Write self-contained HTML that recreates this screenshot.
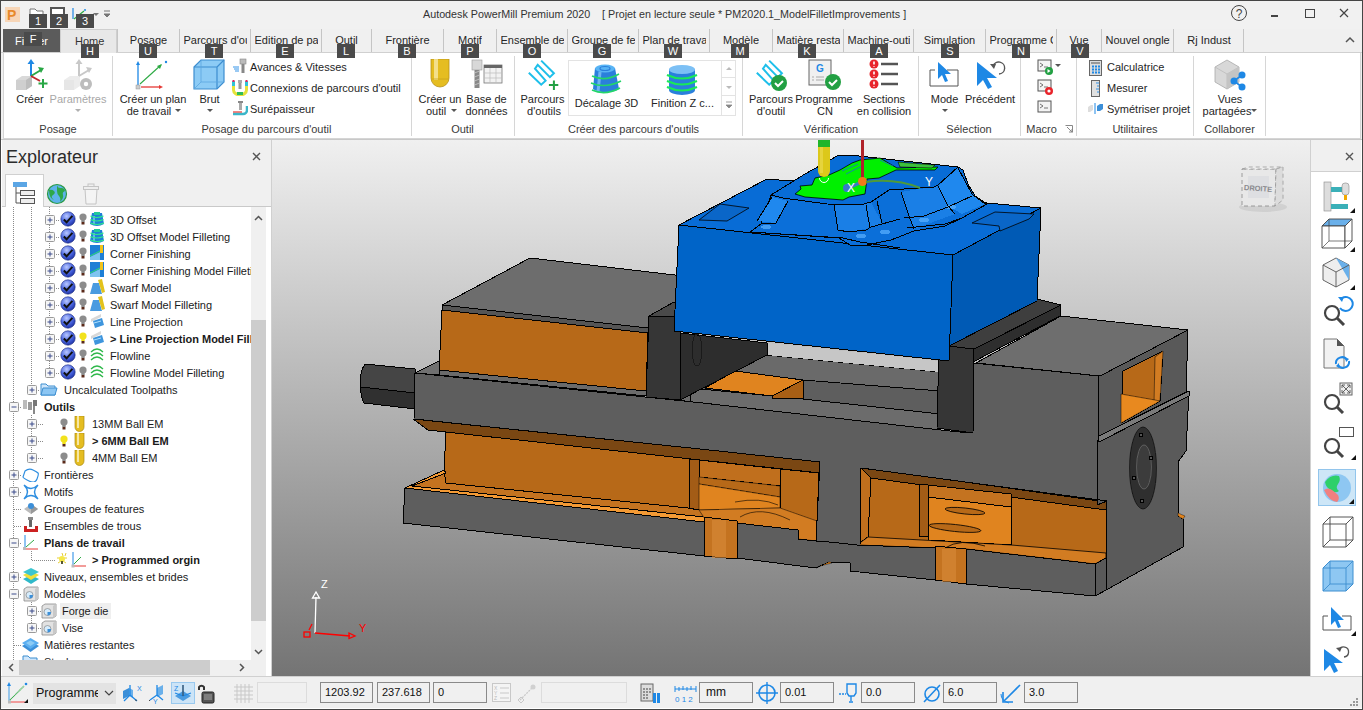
<!DOCTYPE html><html><head><meta charset="utf-8"><style>
*{box-sizing:border-box}
html,body{margin:0;padding:0}
body{width:1363px;height:710px;overflow:hidden;position:relative;background:#f0f0f0;font-family:"Liberation Sans",sans-serif;font-size:11px;color:#1e1e1e}
.ab{position:absolute}
.t{position:absolute;white-space:nowrap;line-height:12px}
.kt{position:absolute;width:18px;height:14px;background:#4a4a4a;color:#fff;font-size:11px;line-height:14px;text-align:center}
.tab{position:absolute;top:29px;height:23px;border-left:1px solid #c5c5c5;text-align:center;line-height:23px;color:#262626;white-space:nowrap;overflow:hidden}
.sep{position:absolute;top:56px;width:1px;height:80px;background:#d6d6d6}
.gl{position:absolute;top:123px;height:12px;line-height:12px;text-align:center;color:#333;white-space:nowrap}
.row{position:absolute;height:17px;line-height:17px;white-space:nowrap}
.box{position:absolute;height:21px;border:1px solid #8a8a8a;background:#f0f0f0;line-height:19px;padding-left:4px;color:#111}
</style></head><body>
<div class="ab" style="left:0;top:0;width:1363px;height:1px;background:#454545"></div>
<div class="ab" style="left:1px;top:1px;width:1361px;height:28px;background:#f1f1f1"></div>
<div class="ab" style="left:5px;top:7px;width:15px;height:15px;background:#f7d6b8"></div>
<div class="t" style="left:7px;top:8px;font-size:14px;font-weight:bold;color:#e8892a;line-height:14px">P</div>
<svg class="ab" style="left:28px;top:6px" width="90" height="20" viewBox="0 0 90 20"><path d="M2 3h5l2 2h6v6H2z" fill="#fff" stroke="#777"/><rect x="23" y="2" width="13" height="12" fill="#fff" stroke="#555" stroke-width="2"/><line x1="45" y1="2" x2="45" y2="13" stroke="#1e88e5" stroke-width="1.2"/><line x1="46" y1="13" x2="56" y2="5" stroke="#2eaa44" stroke-width="1.2"/><circle cx="57" cy="4" r="1" fill="#1e88e5"/><path d="M65 7h6l-3 3z" fill="#777"/><path d="M76 5h6M76 8h6l-3 3z" fill="#777" stroke="#777" stroke-width="1"/></svg>
<div class="t" style="left:423px;top:8px;font-size:10.75px;color:#333;line-height:13px">Autodesk PowerMill Premium 2020</div>
<div class="t" style="left:602px;top:8px;font-size:10.75px;color:#333;line-height:13px">[ Projet en lecture seule * PM2020.1_ModelFilletImprovements ]</div>
<svg class="ab" style="left:1225px;top:3px" width="135" height="22" viewBox="0 0 135 22"><circle cx="14" cy="10" r="7.5" fill="none" stroke="#444" stroke-width="1"/><text x="14" y="14.5" font-family="Liberation Sans" font-size="12" text-anchor="middle" fill="#444">?</text><rect x="46" y="12" width="7" height="2" fill="#444"/><rect x="80.5" y="6.5" width="9" height="8" fill="none" stroke="#444" stroke-width="1"/><path d="M115 6l8 8M123 6l-8 8" stroke="#444" stroke-width="1.2"/></svg>
<div class="ab" style="left:1px;top:52px;width:1361px;height:1px;background:#d0d0d0"></div>
<div class="ab" style="left:3px;top:29px;width:57px;height:23px;background:#5b5b5b"></div>
<div class="t" style="left:15px;top:35px;color:#fff">Fichier</div>
<div class="ab" style="left:60px;top:29px;width:57px;height:24px;background:#e8e8e8;border:1px solid #cfcfcf;border-bottom:none"></div>
<div class="t" style="left:75px;top:35px;color:#333">Home</div>
<div class="tab" style="left:117px;width:62px"><span style="display:inline-block;max-width:54px;overflow:hidden;vertical-align:top">Posage</span></div>
<div class="tab" style="left:179px;width:71px"><span style="display:inline-block;max-width:63px;overflow:hidden;vertical-align:top">Parcours d'outil</span></div>
<div class="tab" style="left:250px;width:71px"><span style="display:inline-block;max-width:63px;overflow:hidden;vertical-align:top">Edition de parcours</span></div>
<div class="tab" style="left:321px;width:50px"><span style="display:inline-block;max-width:42px;overflow:hidden;vertical-align:top">Outil</span></div>
<div class="tab" style="left:371px;width:72px"><span style="display:inline-block;max-width:64px;overflow:hidden;vertical-align:top">Frontière</span></div>
<div class="tab" style="left:443px;width:53px"><span style="display:inline-block;max-width:45px;overflow:hidden;vertical-align:top">Motif</span></div>
<div class="tab" style="left:496px;width:71px"><span style="display:inline-block;max-width:63px;overflow:hidden;vertical-align:top">Ensemble de trous</span></div>
<div class="tab" style="left:567px;width:71px"><span style="display:inline-block;max-width:63px;overflow:hidden;vertical-align:top">Groupe de features</span></div>
<div class="tab" style="left:638px;width:71px"><span style="display:inline-block;max-width:63px;overflow:hidden;vertical-align:top">Plan de travail</span></div>
<div class="tab" style="left:709px;width:63px"><span style="display:inline-block;max-width:55px;overflow:hidden;vertical-align:top">Modèle</span></div>
<div class="tab" style="left:772px;width:71px"><span style="display:inline-block;max-width:63px;overflow:hidden;vertical-align:top">Matière restante</span></div>
<div class="tab" style="left:843px;width:70px"><span style="display:inline-block;max-width:62px;overflow:hidden;vertical-align:top">Machine-outil</span></div>
<div class="tab" style="left:913px;width:72px"><span style="display:inline-block;max-width:64px;overflow:hidden;vertical-align:top">Simulation</span></div>
<div class="tab" style="left:985px;width:71px"><span style="display:inline-block;max-width:63px;overflow:hidden;vertical-align:top">Programme CN</span></div>
<div class="tab" style="left:1056px;width:45px"><span style="display:inline-block;max-width:37px;overflow:hidden;vertical-align:top">Vue</span></div>
<div class="tab" style="left:1101px;width:72px"><span style="display:inline-block;max-width:64px;overflow:hidden;vertical-align:top">Nouvel onglet</span></div>
<div class="tab" style="left:1173px;width:71px"><span style="display:inline-block;max-width:63px;overflow:hidden;vertical-align:top">Rj Indust</span></div>
<div class="ab" style="left:1243px;top:29px;width:1px;height:23px;background:#c5c5c5"></div>
<svg class="ab" style="left:1345px;top:36px" width="10" height="8"><path d="M1 6l4-4 4 4" fill="none" stroke="#555" stroke-width="1.5"/></svg>
<div class="ab" style="left:3px;top:53px;width:1358px;height:86px;background:#fff;border:1px solid #d5d5d5;border-top:none"></div>
<div class="ab" style="left:1px;top:139px;width:1361px;height:1px;background:#c8c8c8"></div>
<div class="sep" style="left:112px"></div>
<div class="sep" style="left:411px"></div>
<div class="sep" style="left:514px"></div>
<div class="sep" style="left:742px"></div>
<div class="sep" style="left:918px"></div>
<div class="sep" style="left:1020px"></div>
<div class="sep" style="left:1076px"></div>
<div class="sep" style="left:1193px"></div>
<div class="sep" style="left:1265px"></div>
<div class="ab" style="left:568px;top:60px;width:168px;height:56px;border:1px solid #e3e3e3;background:#fff"></div>
<div class="ab" style="left:721px;top:61px;width:14px;height:54px;border-left:1px solid #e3e3e3"></div>
<div class="ab" style="left:722px;top:77px;width:13px;height:1px;background:#e3e3e3"></div>
<div class="ab" style="left:722px;top:95px;width:13px;height:1px;background:#e3e3e3"></div>
<svg class="ab" style="left:724px;top:66px" width="10" height="45"><path d="M2 4l3-3 3 3z" fill="#bbb"/><path d="M2 20h6l-3 3z" fill="#bbb"/><path d="M2 36h6M2 39h6l-3 3z" fill="#888" stroke="#888" stroke-width="0.8"/></svg>
<div class="t" style="left:-30px;top:93px;width:120px;text-align:center;color:#262626;">Créer</div>
<div class="t" style="left:18px;top:93px;width:120px;text-align:center;color:#a8a8a8;">Paramètres</div>
<div class="t" style="left:93px;top:93px;width:120px;text-align:center;color:#262626;">Créer un plan</div>
<div class="t" style="left:89px;top:105px;width:120px;text-align:center;color:#262626;">de travail</div>
<div class="t" style="left:149.5px;top:93px;width:120px;text-align:center;color:#262626;">Brut</div>
<div class="t" style="left:380px;top:93px;width:120px;text-align:center;color:#262626;">Créer un</div>
<div class="t" style="left:376px;top:105px;width:120px;text-align:center;color:#262626;">outil</div>
<div class="t" style="left:426.5px;top:93px;width:120px;text-align:center;color:#262626;">Base de</div>
<div class="t" style="left:426.5px;top:105px;width:120px;text-align:center;color:#262626;">données</div>
<div class="t" style="left:482.5px;top:93px;width:120px;text-align:center;color:#262626;">Parcours</div>
<div class="t" style="left:484px;top:105px;width:120px;text-align:center;color:#262626;">d'outils</div>
<div class="t" style="left:546.5px;top:97px;width:120px;text-align:center;color:#262626;">Décalage 3D</div>
<div class="t" style="left:622.5px;top:97px;width:120px;text-align:center;color:#262626;">Finition Z c...</div>
<div class="t" style="left:711px;top:93px;width:120px;text-align:center;color:#262626;">Parcours</div>
<div class="t" style="left:711px;top:105px;width:120px;text-align:center;color:#262626;">d'outil</div>
<div class="t" style="left:764px;top:93px;width:120px;text-align:center;color:#262626;">Programme</div>
<div class="t" style="left:765px;top:105px;width:120px;text-align:center;color:#262626;">CN</div>
<div class="t" style="left:824px;top:93px;width:120px;text-align:center;color:#262626;">Sections</div>
<div class="t" style="left:824px;top:105px;width:120px;text-align:center;color:#262626;">en collision</div>
<div class="t" style="left:884.5px;top:93px;width:120px;text-align:center;color:#262626;">Mode</div>
<div class="t" style="left:930px;top:93px;width:120px;text-align:center;color:#262626;">Précédent</div>
<div class="t" style="left:1170px;top:93px;width:120px;text-align:center;color:#262626;">Vues</div>
<div class="t" style="left:1167px;top:105px;width:120px;text-align:center;color:#262626;">partagées</div>
<svg class="ab" style="left:75px;top:109px" width="6" height="4"><path d="M0 0h6l-3 3z" fill="#b0b0b0"/></svg>
<svg class="ab" style="left:175px;top:109px" width="6" height="4"><path d="M0 0h6l-3 3z" fill="#555"/></svg>
<svg class="ab" style="left:206.5px;top:109px" width="6" height="4"><path d="M0 0h6l-3 3z" fill="#555"/></svg>
<svg class="ab" style="left:451px;top:109px" width="6" height="4"><path d="M0 0h6l-3 3z" fill="#555"/></svg>
<svg class="ab" style="left:941.5px;top:109px" width="6" height="4"><path d="M0 0h6l-3 3z" fill="#555"/></svg>
<svg class="ab" style="left:1251px;top:109px" width="6" height="4"><path d="M0 0h6l-3 3z" fill="#555"/></svg>
<svg class="ab" style="left:1055px;top:64px" width="6" height="4"><path d="M0 0h6l-3 3z" fill="#555"/></svg>
<div class="t" style="left:250px;top:61px">Avances &amp; Vitesses</div>
<div class="t" style="left:250px;top:82px">Connexions de parcours d'outil</div>
<div class="t" style="left:250px;top:103px">Surépaisseur</div>
<div class="t" style="left:1107px;top:61px">Calculatrice</div>
<div class="t" style="left:1107px;top:82px">Mesurer</div>
<div class="t" style="left:1107px;top:103px">Symétriser projet</div>
<div class="t" style="left:-2px;top:123px;width:120px;text-align:center;color:#3a3a3a;">Posage</div>
<div class="t" style="left:201.5px;top:123px;width:120px;text-align:center;color:#3a3a3a;">Posage du parcours d'outil</div>
<div class="t" style="left:402.5px;top:123px;width:120px;text-align:center;color:#3a3a3a;">Outil</div>
<div class="t" style="left:568px;top:123px;width:120px;text-align:center;color:#3a3a3a;">Créer des parcours d'outils</div>
<div class="t" style="left:771px;top:123px;width:120px;text-align:center;color:#3a3a3a;">Vérification</div>
<div class="t" style="left:909px;top:123px;width:120px;text-align:center;color:#3a3a3a;">Sélection</div>
<div class="t" style="left:981.5px;top:123px;width:120px;text-align:center;color:#3a3a3a;">Macro</div>
<div class="t" style="left:1075px;top:123px;width:120px;text-align:center;color:#3a3a3a;">Utilitaires</div>
<div class="t" style="left:1169.5px;top:123px;width:120px;text-align:center;color:#3a3a3a;">Collaborer</div>
<svg class="ab" style="left:1065px;top:125px" width="8" height="8"><path d="M0.5 0.5h7v7" fill="none" stroke="#888"/><path d="M2 2l5 5M7 4v3h-3" fill="none" stroke="#888"/></svg>

<svg class="ab" style="left:14px;top:59px" width="34" height="34" viewBox="0 0 34 34">
 <path d="M2 21l6-4h10v10l-6 4H2z" fill="#d9d9d9"/><path d="M2 21h10v10H2z" fill="#cfcfcf"/><path d="M12 21l6-4v10l-6 4z" fill="#bdbdbd"/>
 <line x1="17" y1="17" x2="17" y2="3" stroke="#1e88e5" stroke-width="2"/><path d="M13.5 5l3.5-5 3.5 5z" fill="#1e88e5"/>
 <line x1="17" y1="17" x2="27" y2="11" stroke="#28a745" stroke-width="2"/><path d="M24 8l6 1-3 5z" fill="#28a745"/>
 <line x1="17" y1="17" x2="26" y2="22" stroke="#c0282d" stroke-width="2"/>
 <path d="M29 20v9M24.5 24.5h9" stroke="#28a745" stroke-width="2"/>
</svg>
<svg class="ab" style="left:62px;top:59px" width="34" height="34" viewBox="0 0 34 34">
 <path d="M2 21l6-4h10v10l-6 4H2z" fill="#ececec"/><path d="M2 21h10v10H2z" fill="#e6e6e6"/>
 <line x1="17" y1="17" x2="17" y2="3" stroke="#c8c8c8" stroke-width="2"/><path d="M13.5 5l3.5-5 3.5 5z" fill="#c8c8c8"/>
 <line x1="17" y1="17" x2="27" y2="11" stroke="#c8c8c8" stroke-width="2"/><path d="M24 8l6 1-3 5z" fill="#c8c8c8"/>
 <circle cx="24" cy="25" r="6" fill="#bdbdbd"/><circle cx="24" cy="25" r="2.2" fill="#fff"/>
</svg>
<svg class="ab" style="left:135px;top:59px" width="36" height="32" viewBox="0 0 36 32">
 <line x1="3" y1="27" x2="3" y2="4" stroke="#1e88e5" stroke-width="1.3"/><path d="M1 6l2-4 2 4z" fill="#1e88e5"/>
 <line x1="5" y1="25" x2="26" y2="6" stroke="#2eaa44" stroke-width="1.1"/><path d="M22 7l5-2-2 5z" fill="#2eaa44"/><circle cx="31" cy="3" r="1.2" fill="#1e88e5"/>
 <line x1="6" y1="28" x2="26" y2="28" stroke="#e53935" stroke-width="1.3"/><path d="M24 26l4 2-4 2z" fill="#e53935"/>
 <rect x="1" y="26" width="4" height="4" fill="#ccc" stroke="#999" stroke-width="0.5"/>
</svg>
<svg class="ab" style="left:193px;top:59px" width="32" height="32" viewBox="0 0 32 32">
 <path d="M1 8l7-7h23v22l-7 7H1z" fill="#8ccbf5" stroke="#3d8ed0" stroke-width="1.2"/>
 <path d="M1 8h23v22M24 8l7-7" fill="none" stroke="#3d8ed0" stroke-width="1.2"/>
 <path d="M8 1v22h23M8 23l-7 7" fill="none" stroke="#5ca6df" stroke-width="0.8"/>
</svg>
<svg class="ab" style="left:231px;top:58px" width="16" height="16" viewBox="0 0 16 16">
 <rect x="9" y="1" width="6" height="5" fill="#bbb" stroke="#888" stroke-width="0.6"/><rect x="10.5" y="6" width="3" height="9" fill="#888"/>
 <path d="M2 9h6M3 11h5M4 13h4" stroke="#1e88e5" stroke-width="0.9"/>
</svg>
<svg class="ab" style="left:232px;top:79px" width="16" height="17" viewBox="0 0 16 17">
 <rect x="6" y="1" width="4" height="3" fill="#aaa"/><rect x="6.5" y="4" width="3" height="6" fill="#999"/>
 <path d="M1.5 2v9a6.5 5 0 0 0 13 0V2" fill="none" stroke="#e5e23a" stroke-width="3"/>
 <path d="M1.5 2v5M14.5 2v5" stroke="#2fc4d8" stroke-width="3"/><path d="M1.5 1v2M14.5 1v2" stroke="#e0245e" stroke-width="2"/>
 <path d="M5 14.5h6" stroke="#2ebd59" stroke-width="3"/>
</svg>
<svg class="ab" style="left:232px;top:100px" width="16" height="17" viewBox="0 0 16 17">
 <rect x="6" y="1" width="5" height="2" fill="#888"/><rect x="7" y="3" width="3" height="7" fill="#aaa"/>
 <path d="M1 14h10a4 4 0 0 0 4-4V6" fill="none" stroke="#3bb6c9" stroke-width="2.5"/>
 <path d="M1 12h9" stroke="#e53935" stroke-width="1.2"/>
</svg>
<svg class="ab" style="left:428px;top:59px" width="24" height="32" viewBox="0 0 24 32">
 <path d="M3 0h18v19a9 9 0 0 1-18 0z" fill="#e5bd21" stroke="#b8921a" stroke-width="0.8"/>
 <rect x="6" y="0" width="4" height="21" fill="#f6e7a5" opacity="0.8"/><line x1="3" y1="20" x2="21" y2="20" stroke="#c9a31f" stroke-width="0.8"/>
</svg>
<svg class="ab" style="left:471px;top:59px" width="32" height="32" viewBox="0 0 32 32">
 <rect x="1" y="1" width="10" height="10" fill="#d8d8d8" stroke="#999" stroke-width="0.6"/>
 <rect x="3.5" y="11" width="5" height="18" fill="#888"/><path d="M3.5 14l5-2M3.5 18l5-2M3.5 22l5-2M3.5 26l5-2" stroke="#ccc" stroke-width="0.8"/>
 <rect x="13" y="6" width="18" height="18" fill="#f2f2f2" stroke="#777" stroke-width="0.8"/><rect x="13" y="6" width="18" height="3" fill="#666"/>
 <path d="M13 14h18M13 19h18M19 9v15M25 9v15" stroke="#bbb" stroke-width="0.7"/>
</svg>
<svg class="ab" style="left:524px;top:56px" width="40" height="36" viewBox="0 0 40 36">
 <path d="M4.8,16.8 L17.2,28.7 L21.6,24.7 L11,12.7 L13.7,8.9 L25.9,21.1 L29.9,17.2 L17.2,4.6" fill="none" stroke="#1ebfea" stroke-width="2"/>
 <path d="M29.9,24.4V34M24.9,29H34.3" stroke="#22a043" stroke-width="2"/>
</svg>
<svg class="ab" style="left:590px;top:63px" width="32" height="34" viewBox="0 0 32 34">
 <path d="M5 5h20l4 21a14 5 0 0 1-26 0z" fill="#2a7fdc"/>
 <ellipse cx="15" cy="5.5" rx="10" ry="4" fill="#58b4f5"/><ellipse cx="15" cy="5.5" rx="5" ry="2" fill="none" stroke="#2a7fdc" stroke-width="1.2"/>
 <path d="M10 9l-2 20" stroke="#7ec3f7" stroke-width="3" opacity="0.8"/>
 <path d="M2 13q13 6 27-2M1 20q14 6 30-2M2 27q13 6 28-2" fill="none" stroke="#23d66a" stroke-width="1.6"/>
</svg>
<svg class="ab" style="left:666px;top:64px" width="32" height="32" viewBox="0 0 32 32">
 <path d="M3 5v21a13 5 0 0 0 26 0V5z" fill="#2a7fdc"/><ellipse cx="16" cy="5.5" rx="13" ry="4.5" fill="#7cc0f5"/>
 <path d="M1 11q15 7 30 0M1 17q15 7 30 0M1 23q15 7 30 0" fill="none" stroke="#19e85a" stroke-width="2"/>
</svg>
<svg class="ab" style="left:752px;top:56px" width="40" height="36" viewBox="0 0 40 36">
 <path d="M4.8,16.8 L17.2,28.7 L21.6,24.7 L11,12.7 L13.7,8.9 L25.9,21.1 L29.9,17.2 L17.2,4.6" fill="none" stroke="#1ebfea" stroke-width="2"/>
 <circle cx="27" cy="27" r="8" fill="#22a043"/><path d="M23 27l3 3 5-5" fill="none" stroke="#fff" stroke-width="2"/>
</svg>
<svg class="ab" style="left:808px;top:59px" width="34" height="32" viewBox="0 0 34 32">
 <rect x="1" y="1" width="22" height="25" fill="#f0f0f0" stroke="#666" stroke-width="1"/>
 <text x="12" y="13" font-family="Liberation Sans" font-weight="bold" font-size="10" fill="#1e88e5" text-anchor="middle">G</text>
 <path d="M4 18h2M8 18h8M4 21h2M8 21h8" stroke="#aaa" stroke-width="1"/>
 <circle cx="25" cy="23" r="8" fill="#22a043"/><path d="M21 23l3 3 5-5" fill="none" stroke="#fff" stroke-width="2"/>
</svg>
<svg class="ab" style="left:868px;top:59px" width="34" height="32" viewBox="0 0 34 32">
 <circle cx="6" cy="5" r="4.5" fill="#e8242b"/><circle cx="6" cy="15" r="4.5" fill="#e8242b"/><circle cx="6" cy="25" r="4.5" fill="#e8242b"/>
 <path d="M6 2.5v3M6 12.5v3M6 22.5v3" stroke="#fff" stroke-width="1.6"/><path d="M6 7v.8M6 17v.8M6 27v.8" stroke="#fff" stroke-width="1.4"/>
 <path d="M13 5h17M13 15h17M13 25h17" stroke="#555" stroke-width="2.4"/>
</svg>
<svg class="ab" style="left:929px;top:61px" width="32" height="28" viewBox="0 0 32 28">
 <path d="M1 9h5M18 9h11v16H1V9" fill="none" stroke="#555" stroke-width="1"/>
 <path d="M9 1v17l4-4 3 7 3-1-3-7h6z" fill="#1e88e5"/>
</svg>
<svg class="ab" style="left:975px;top:60px" width="32" height="30" viewBox="0 0 32 30">
 <path d="M2 2v24l6-6 5 9 4-2-5-9h10z" fill="#1e88e5"/>
 <path d="M18 6a6 6 0 1 1 6 8" fill="none" stroke="#555" stroke-width="1.4"/><path d="M15 4l4 5 2-5z" fill="#555"/>
</svg>
<svg class="ab" style="left:1037px;top:59px" width="20" height="56" viewBox="0 0 20 56">
 <rect x="1" y="1" width="13" height="11" fill="#f4f4f4" stroke="#555" stroke-width="1"/><path d="M3 4l3 2-3 2M7 8h4" fill="none" stroke="#555" stroke-width="0.8"/>
 <circle cx="12" cy="12" r="4" fill="#22a043"/><path d="M10.5 10v4l3-2z" fill="#fff"/>
 <rect x="1" y="21" width="13" height="11" fill="#f4f4f4" stroke="#555" stroke-width="1"/><path d="M3 24l3 2-3 2M7 28h4" fill="none" stroke="#555" stroke-width="0.8"/>
 <circle cx="12" cy="32" r="4" fill="#e8242b"/><circle cx="12" cy="32" r="1.6" fill="#fff"/>
 <rect x="1" y="42" width="13" height="11" fill="#f4f4f4" stroke="#555" stroke-width="1"/><path d="M3 45l3 2-3 2M7 49h4" fill="none" stroke="#555" stroke-width="0.8"/>
</svg>
<svg class="ab" style="left:1088px;top:59px" width="16" height="58" viewBox="0 0 16 58">
 <rect x="1.5" y="1.5" width="12" height="15" fill="#ddd" stroke="#666" stroke-width="1"/><rect x="3" y="3" width="9" height="2" fill="#999"/>
 <path d="M4 7.5h2M7 7.5h2M10 7.5h2M4 10.5h2M7 10.5h2M10 10.5h2M4 13.5h2M7 13.5h2M10 13.5h2" stroke="#1e88e5" stroke-width="1.8"/>
 <rect x="3.5" y="21.5" width="8" height="16" fill="#e0e0e0" stroke="#666" stroke-width="1"/><path d="M8 24h3M9 27h2M8 30h3M9 33h2" stroke="#1e88e5" stroke-width="0.9"/>
 <path d="M0 48l3-2h2v5l-3 2H0z" fill="#ddd"/><line x1="7" y1="44" x2="7" y2="55" stroke="#1e88e5" stroke-width="1"/><path d="M9 47l3-2h3v5l-3 2H9z" fill="#3c8fd8"/>
</svg>
<svg class="ab" style="left:1213px;top:59px" width="34" height="32" viewBox="0 0 34 32">
 <path d="M2 8l12-7 12 7v15l-12 7-12-7z" fill="#d8d8d8" stroke="#aaa" stroke-width="0.8"/>
 <path d="M2 8l12 7 12-7M14 15v15" fill="none" stroke="#bbb" stroke-width="0.8"/><path d="M14 15l12-7v15l-12 7z" fill="#c4c4c4"/>
 <circle cx="29" cy="16" r="3.5" fill="#1e88e5"/><circle cx="21" cy="22" r="3.5" fill="#1e88e5"/><circle cx="29" cy="28" r="3.5" fill="#1e88e5"/>
 <path d="M29 16l-8 6 8 6" fill="none" stroke="#1e88e5" stroke-width="1.6"/>
</svg>

<div class="ab" style="left:1px;top:140px;width:271px;height:536px;background:#f0f0f0"></div>
<div class="ab" style="left:1px;top:140px;width:1px;height:570px;background:#fff"></div>
<div class="t" style="left:6px;top:147px;font-size:18px;line-height:20px;color:#2b2b2b">Explorateur</div>
<svg class="ab" style="left:252px;top:152px" width="9" height="9"><path d="M1 1l7 7M8 1l-7 7" stroke="#555" stroke-width="1.4"/></svg>
<div class="ab" style="left:2px;top:206px;width:269px;height:1px;background:#c9c9c9"></div>
<div class="ab" style="left:5px;top:174px;width:39px;height:33px;background:#fff;border:1px solid #d0d0d0;border-bottom:none"></div>
<svg class="ab" style="left:12px;top:181px" width="24" height="24" viewBox="0 0 24 24">
 <rect x="1" y="1" width="14" height="5" fill="#5ba6e5"/>
 <path d="M4 6v16h4M4 12h4" fill="none" stroke="#555" stroke-width="1"/>
 <rect x="8.5" y="9.5" width="14" height="5" fill="#eee" stroke="#555"/><rect x="8.5" y="17.5" width="14" height="5" fill="#eee" stroke="#555"/>
</svg>
<svg class="ab" style="left:46px;top:183px" width="22" height="22" viewBox="0 0 22 22">
 <circle cx="11" cy="11" r="9.5" fill="#5db3ea" stroke="#2a9a46" stroke-width="1.2"/>
 <path d="M3 7q3-1 5 1t-1 4 1 5q-5-2-5-10z" fill="#2ea84a"/>
 <path d="M11 2.5q1 3 4 2.5t4 3q-3 1-2 4t-3 7q1-4-1-6t-2-5z" fill="#2ea84a"/>
</svg>
<svg class="ab" style="left:82px;top:183px" width="18" height="22" viewBox="0 0 18 22">
 <path d="M3 6h12l-1 15H4z" fill="#f4f4f4" stroke="#c4c4c4"/><rect x="1.5" y="3.5" width="15" height="3" fill="#eee" stroke="#c4c4c4"/><rect x="6" y="1" width="6" height="2.5" fill="none" stroke="#c4c4c4"/>
</svg>
<div class="ab" style="left:2px;top:207px;width:249px;height:453px;background:#fff"></div>
<div class="ab" style="left:251px;top:207px;width:15px;height:453px;background:#f0f0f0"></div>
<div class="ab" style="left:251px;top:320px;width:15px;height:301px;background:#cdcdcd"></div>
<svg class="ab" style="left:254px;top:215px" width="9" height="6"><path d="M1 5l3.5-3.5L8 5" fill="none" stroke="#555" stroke-width="1.5"/></svg>
<svg class="ab" style="left:254px;top:649px" width="9" height="6"><path d="M1 1l3.5 3.5L8 1" fill="none" stroke="#555" stroke-width="1.5"/></svg>
<div class="ab" style="left:2px;top:660px;width:264px;height:15px;background:#f0f0f0"></div>
<div class="ab" style="left:19px;top:660px;width:191px;height:15px;background:#cdcdcd"></div>
<svg class="ab" style="left:8px;top:663px" width="6" height="9"><path d="M5 1L1.5 4.5 5 8" fill="none" stroke="#555" stroke-width="1.5"/></svg>
<svg class="ab" style="left:239px;top:663px" width="6" height="9"><path d="M1 1l3.5 3.5L1 8" fill="none" stroke="#555" stroke-width="1.5"/></svg>
<div class="ab" style="left:266px;top:207px;width:5px;height:469px;background:#fff"></div>
<div class="ab" style="left:271px;top:140px;width:1px;height:536px;background:#d0d0d0"></div>
<div class="ab" style="left:2px;top:207px;width:249px;height:453px;overflow:hidden">
<div class="ab" style="left:-2px;top:-207px;width:251px;height:870px"><div class="ab" style="left:13px;top:207px;width:1px;height:453px;background:repeating-linear-gradient(#8a8a8a 0 1px,transparent 1px 2px)"></div><div class="ab" style="left:31px;top:207px;width:1px;height:182px;background:repeating-linear-gradient(#8a8a8a 0 1px,transparent 1px 2px)"></div><div class="ab" style="left:49px;top:207px;width:1px;height:165px;background:repeating-linear-gradient(#8a8a8a 0 1px,transparent 1px 2px)"></div><div class="ab" style="left:54px;top:220px;width:6px;height:1px;background:repeating-linear-gradient(90deg,#8a8a8a 0 1px,transparent 1px 2px)"></div><svg class="ab" style="left:45px;top:215px" width="10" height="10"><rect x="0.5" y="0.5" width="9" height="9" rx="1" fill="#f6f6f6" stroke="#9a9a9a"/><path d="M2.5 5h5M5 2.5v5" stroke="#3a4a8a" stroke-width="1"/></svg><svg class="ab" style="left:60px;top:211px" width="16" height="16" viewBox="0 0 16 16"><defs><radialGradient id="cg" cx="0.4" cy="0.3" r="0.7"><stop offset="0" stop-color="#b9c8ff"/><stop offset="0.6" stop-color="#4a66e0"/><stop offset="1" stop-color="#2236a8"/></radialGradient></defs><circle cx="8" cy="8" r="7.2" fill="url(#cg)" stroke="#1b2a80" stroke-width="0.6"/><path d="M3.8 8.5l2.8 2.8 5.8-6.5" fill="none" stroke="#111" stroke-width="2"/></svg><svg class="ab" style="left:79px;top:213px" width="8" height="12" viewBox="0 0 8 12"><circle cx="4" cy="4" r="3.6" fill="#8c8c8c"/><rect x="2.3" y="6" width="3.4" height="3" fill="#8c8c8c"/><rect x="2.5" y="9" width="3" height="2.5" fill="#5a2a1a"/></svg><svg class="ab" style="left:90px;top:211px" width="15" height="16" viewBox="0 0 15 16"><path d="M2 2h10l2 11q-7 4-14 0z" fill="#1f7fd8"/><rect x="4" y="1" width="6" height="3" fill="#22c99a"/><path d="M4 5v8" stroke="#7cc4f5" stroke-width="1.5"/><path d="M0.5 5q6 3 13 0M0.5 8.5q6 3 13 0M0.5 12q6.5 3 13.5 0" stroke="#2ee88a" stroke-width="1.1" fill="none"/></svg><div class="t" style="left:110px;top:213.5px;color:#1a1a1a;">3D Offset</div><div class="ab" style="left:54px;top:237px;width:6px;height:1px;background:repeating-linear-gradient(90deg,#8a8a8a 0 1px,transparent 1px 2px)"></div><svg class="ab" style="left:45px;top:232px" width="10" height="10"><rect x="0.5" y="0.5" width="9" height="9" rx="1" fill="#f6f6f6" stroke="#9a9a9a"/><path d="M2.5 5h5M5 2.5v5" stroke="#3a4a8a" stroke-width="1"/></svg><svg class="ab" style="left:60px;top:228px" width="16" height="16" viewBox="0 0 16 16"><defs><radialGradient id="cg" cx="0.4" cy="0.3" r="0.7"><stop offset="0" stop-color="#b9c8ff"/><stop offset="0.6" stop-color="#4a66e0"/><stop offset="1" stop-color="#2236a8"/></radialGradient></defs><circle cx="8" cy="8" r="7.2" fill="url(#cg)" stroke="#1b2a80" stroke-width="0.6"/><path d="M3.8 8.5l2.8 2.8 5.8-6.5" fill="none" stroke="#111" stroke-width="2"/></svg><svg class="ab" style="left:79px;top:230px" width="8" height="12" viewBox="0 0 8 12"><circle cx="4" cy="4" r="3.6" fill="#8c8c8c"/><rect x="2.3" y="6" width="3.4" height="3" fill="#8c8c8c"/><rect x="2.5" y="9" width="3" height="2.5" fill="#5a2a1a"/></svg><svg class="ab" style="left:90px;top:228px" width="15" height="16" viewBox="0 0 15 16"><path d="M2 2h10l2 11q-7 4-14 0z" fill="#1f7fd8"/><rect x="4" y="1" width="6" height="3" fill="#22c99a"/><path d="M4 5v8" stroke="#7cc4f5" stroke-width="1.5"/><path d="M0.5 5q6 3 13 0M0.5 8.5q6 3 13 0M0.5 12q6.5 3 13.5 0" stroke="#2ee88a" stroke-width="1.1" fill="none"/></svg><div class="t" style="left:110px;top:230.5px;color:#1a1a1a;">3D Offset Model Filleting</div><div class="ab" style="left:54px;top:254px;width:6px;height:1px;background:repeating-linear-gradient(90deg,#8a8a8a 0 1px,transparent 1px 2px)"></div><svg class="ab" style="left:45px;top:249px" width="10" height="10"><rect x="0.5" y="0.5" width="9" height="9" rx="1" fill="#f6f6f6" stroke="#9a9a9a"/><path d="M2.5 5h5M5 2.5v5" stroke="#3a4a8a" stroke-width="1"/></svg><svg class="ab" style="left:60px;top:245px" width="16" height="16" viewBox="0 0 16 16"><defs><radialGradient id="cg" cx="0.4" cy="0.3" r="0.7"><stop offset="0" stop-color="#b9c8ff"/><stop offset="0.6" stop-color="#4a66e0"/><stop offset="1" stop-color="#2236a8"/></radialGradient></defs><circle cx="8" cy="8" r="7.2" fill="url(#cg)" stroke="#1b2a80" stroke-width="0.6"/><path d="M3.8 8.5l2.8 2.8 5.8-6.5" fill="none" stroke="#111" stroke-width="2"/></svg><svg class="ab" style="left:79px;top:247px" width="8" height="12" viewBox="0 0 8 12"><circle cx="4" cy="4" r="3.6" fill="#8c8c8c"/><rect x="2.3" y="6" width="3.4" height="3" fill="#8c8c8c"/><rect x="2.5" y="9" width="3" height="2.5" fill="#5a2a1a"/></svg><svg class="ab" style="left:90px;top:245px" width="15" height="16" viewBox="0 0 15 16"><rect x="0" y="0" width="14" height="15" fill="#1e7fd6"/><path d="M0 12L10 7v8H0z" fill="#7fc4f0"/><path d="M0 11l10-5" stroke="#2ee070" stroke-width="1"/><rect x="10" y="0" width="3" height="8" fill="#f2c21a"/></svg><div class="t" style="left:110px;top:247.5px;color:#1a1a1a;">Corner Finishing</div><div class="ab" style="left:54px;top:271px;width:6px;height:1px;background:repeating-linear-gradient(90deg,#8a8a8a 0 1px,transparent 1px 2px)"></div><svg class="ab" style="left:45px;top:266px" width="10" height="10"><rect x="0.5" y="0.5" width="9" height="9" rx="1" fill="#f6f6f6" stroke="#9a9a9a"/><path d="M2.5 5h5M5 2.5v5" stroke="#3a4a8a" stroke-width="1"/></svg><svg class="ab" style="left:60px;top:262px" width="16" height="16" viewBox="0 0 16 16"><defs><radialGradient id="cg" cx="0.4" cy="0.3" r="0.7"><stop offset="0" stop-color="#b9c8ff"/><stop offset="0.6" stop-color="#4a66e0"/><stop offset="1" stop-color="#2236a8"/></radialGradient></defs><circle cx="8" cy="8" r="7.2" fill="url(#cg)" stroke="#1b2a80" stroke-width="0.6"/><path d="M3.8 8.5l2.8 2.8 5.8-6.5" fill="none" stroke="#111" stroke-width="2"/></svg><svg class="ab" style="left:79px;top:264px" width="8" height="12" viewBox="0 0 8 12"><circle cx="4" cy="4" r="3.6" fill="#8c8c8c"/><rect x="2.3" y="6" width="3.4" height="3" fill="#8c8c8c"/><rect x="2.5" y="9" width="3" height="2.5" fill="#5a2a1a"/></svg><svg class="ab" style="left:90px;top:262px" width="15" height="16" viewBox="0 0 15 16"><rect x="0" y="0" width="14" height="15" fill="#1e7fd6"/><path d="M0 12L10 7v8H0z" fill="#7fc4f0"/><path d="M0 11l10-5" stroke="#2ee070" stroke-width="1"/><rect x="10" y="0" width="3" height="8" fill="#f2c21a"/></svg><div class="t" style="left:110px;top:264.5px;color:#1a1a1a;">Corner Finishing Model Filleting</div><div class="ab" style="left:54px;top:288px;width:6px;height:1px;background:repeating-linear-gradient(90deg,#8a8a8a 0 1px,transparent 1px 2px)"></div><svg class="ab" style="left:45px;top:283px" width="10" height="10"><rect x="0.5" y="0.5" width="9" height="9" rx="1" fill="#f6f6f6" stroke="#9a9a9a"/><path d="M2.5 5h5M5 2.5v5" stroke="#3a4a8a" stroke-width="1"/></svg><svg class="ab" style="left:60px;top:279px" width="16" height="16" viewBox="0 0 16 16"><defs><radialGradient id="cg" cx="0.4" cy="0.3" r="0.7"><stop offset="0" stop-color="#b9c8ff"/><stop offset="0.6" stop-color="#4a66e0"/><stop offset="1" stop-color="#2236a8"/></radialGradient></defs><circle cx="8" cy="8" r="7.2" fill="url(#cg)" stroke="#1b2a80" stroke-width="0.6"/><path d="M3.8 8.5l2.8 2.8 5.8-6.5" fill="none" stroke="#111" stroke-width="2"/></svg><svg class="ab" style="left:79px;top:281px" width="8" height="12" viewBox="0 0 8 12"><circle cx="4" cy="4" r="3.6" fill="#8c8c8c"/><rect x="2.3" y="6" width="3.4" height="3" fill="#8c8c8c"/><rect x="2.5" y="9" width="3" height="2.5" fill="#5a2a1a"/></svg><svg class="ab" style="left:90px;top:279px" width="15" height="16" viewBox="0 0 15 16"><path d="M3 4h6l3 11H0z" fill="#4a9be0"/><path d="M8 1l4-1 3 13-3 1z" fill="#e3c21c"/></svg><div class="t" style="left:110px;top:281.5px;color:#1a1a1a;">Swarf Model</div><div class="ab" style="left:54px;top:305px;width:6px;height:1px;background:repeating-linear-gradient(90deg,#8a8a8a 0 1px,transparent 1px 2px)"></div><svg class="ab" style="left:45px;top:300px" width="10" height="10"><rect x="0.5" y="0.5" width="9" height="9" rx="1" fill="#f6f6f6" stroke="#9a9a9a"/><path d="M2.5 5h5M5 2.5v5" stroke="#3a4a8a" stroke-width="1"/></svg><svg class="ab" style="left:60px;top:296px" width="16" height="16" viewBox="0 0 16 16"><defs><radialGradient id="cg" cx="0.4" cy="0.3" r="0.7"><stop offset="0" stop-color="#b9c8ff"/><stop offset="0.6" stop-color="#4a66e0"/><stop offset="1" stop-color="#2236a8"/></radialGradient></defs><circle cx="8" cy="8" r="7.2" fill="url(#cg)" stroke="#1b2a80" stroke-width="0.6"/><path d="M3.8 8.5l2.8 2.8 5.8-6.5" fill="none" stroke="#111" stroke-width="2"/></svg><svg class="ab" style="left:79px;top:298px" width="8" height="12" viewBox="0 0 8 12"><circle cx="4" cy="4" r="3.6" fill="#8c8c8c"/><rect x="2.3" y="6" width="3.4" height="3" fill="#8c8c8c"/><rect x="2.5" y="9" width="3" height="2.5" fill="#5a2a1a"/></svg><svg class="ab" style="left:90px;top:296px" width="15" height="16" viewBox="0 0 15 16"><path d="M3 4h6l3 11H0z" fill="#4a9be0"/><path d="M8 1l4-1 3 13-3 1z" fill="#e3c21c"/></svg><div class="t" style="left:110px;top:298.5px;color:#1a1a1a;">Swarf Model Filleting</div><div class="ab" style="left:54px;top:322px;width:6px;height:1px;background:repeating-linear-gradient(90deg,#8a8a8a 0 1px,transparent 1px 2px)"></div><svg class="ab" style="left:45px;top:317px" width="10" height="10"><rect x="0.5" y="0.5" width="9" height="9" rx="1" fill="#f6f6f6" stroke="#9a9a9a"/><path d="M2.5 5h5M5 2.5v5" stroke="#3a4a8a" stroke-width="1"/></svg><svg class="ab" style="left:60px;top:313px" width="16" height="16" viewBox="0 0 16 16"><defs><radialGradient id="cg" cx="0.4" cy="0.3" r="0.7"><stop offset="0" stop-color="#b9c8ff"/><stop offset="0.6" stop-color="#4a66e0"/><stop offset="1" stop-color="#2236a8"/></radialGradient></defs><circle cx="8" cy="8" r="7.2" fill="url(#cg)" stroke="#1b2a80" stroke-width="0.6"/><path d="M3.8 8.5l2.8 2.8 5.8-6.5" fill="none" stroke="#111" stroke-width="2"/></svg><svg class="ab" style="left:79px;top:315px" width="8" height="12" viewBox="0 0 8 12"><circle cx="4" cy="4" r="3.6" fill="#8c8c8c"/><rect x="2.3" y="6" width="3.4" height="3" fill="#8c8c8c"/><rect x="2.5" y="9" width="3" height="2.5" fill="#5a2a1a"/></svg><svg class="ab" style="left:90px;top:313px" width="15" height="16" viewBox="0 0 15 16"><path d="M1 6l10-5v3L1 9z" fill="#d8d8d8"/><path d="M3 8l9-3 2 7-9 3z" fill="#3e95dd"/><path d="M4 10l7-2" stroke="#aee0ff"/></svg><div class="t" style="left:110px;top:315.5px;color:#1a1a1a;">Line Projection</div><div class="ab" style="left:54px;top:339px;width:6px;height:1px;background:repeating-linear-gradient(90deg,#8a8a8a 0 1px,transparent 1px 2px)"></div><svg class="ab" style="left:45px;top:334px" width="10" height="10"><rect x="0.5" y="0.5" width="9" height="9" rx="1" fill="#f6f6f6" stroke="#9a9a9a"/><path d="M2.5 5h5M5 2.5v5" stroke="#3a4a8a" stroke-width="1"/></svg><svg class="ab" style="left:60px;top:330px" width="16" height="16" viewBox="0 0 16 16"><defs><radialGradient id="cg" cx="0.4" cy="0.3" r="0.7"><stop offset="0" stop-color="#b9c8ff"/><stop offset="0.6" stop-color="#4a66e0"/><stop offset="1" stop-color="#2236a8"/></radialGradient></defs><circle cx="8" cy="8" r="7.2" fill="url(#cg)" stroke="#1b2a80" stroke-width="0.6"/><path d="M3.8 8.5l2.8 2.8 5.8-6.5" fill="none" stroke="#111" stroke-width="2"/></svg><svg class="ab" style="left:79px;top:332px" width="8" height="12" viewBox="0 0 8 12"><circle cx="4" cy="4" r="3.6" fill="#f2e21c"/><rect x="2.3" y="6" width="3.4" height="3" fill="#f2e21c"/><rect x="2.5" y="9" width="3" height="2.5" fill="#5a2a1a"/></svg><svg class="ab" style="left:90px;top:330px" width="15" height="16" viewBox="0 0 15 16"><path d="M1 6l10-5v3L1 9z" fill="#d8d8d8"/><path d="M3 8l9-3 2 7-9 3z" fill="#3e95dd"/><path d="M4 10l7-2" stroke="#aee0ff"/></svg><div class="t" style="left:110px;top:332.5px;color:#1a1a1a;font-weight:bold;">&gt; Line Projection Model Filleting</div><div class="ab" style="left:54px;top:356px;width:6px;height:1px;background:repeating-linear-gradient(90deg,#8a8a8a 0 1px,transparent 1px 2px)"></div><svg class="ab" style="left:45px;top:351px" width="10" height="10"><rect x="0.5" y="0.5" width="9" height="9" rx="1" fill="#f6f6f6" stroke="#9a9a9a"/><path d="M2.5 5h5M5 2.5v5" stroke="#3a4a8a" stroke-width="1"/></svg><svg class="ab" style="left:60px;top:347px" width="16" height="16" viewBox="0 0 16 16"><defs><radialGradient id="cg" cx="0.4" cy="0.3" r="0.7"><stop offset="0" stop-color="#b9c8ff"/><stop offset="0.6" stop-color="#4a66e0"/><stop offset="1" stop-color="#2236a8"/></radialGradient></defs><circle cx="8" cy="8" r="7.2" fill="url(#cg)" stroke="#1b2a80" stroke-width="0.6"/><path d="M3.8 8.5l2.8 2.8 5.8-6.5" fill="none" stroke="#111" stroke-width="2"/></svg><svg class="ab" style="left:79px;top:349px" width="8" height="12" viewBox="0 0 8 12"><circle cx="4" cy="4" r="3.6" fill="#8c8c8c"/><rect x="2.3" y="6" width="3.4" height="3" fill="#8c8c8c"/><rect x="2.5" y="9" width="3" height="2.5" fill="#5a2a1a"/></svg><svg class="ab" style="left:90px;top:347px" width="15" height="16" viewBox="0 0 15 16"><path d="M1 5q6-6 12 0M1 9q6-6 12 0M1 13q6-6 12 0" fill="none" stroke="#2eb84a" stroke-width="1.3"/></svg><div class="t" style="left:110px;top:349.5px;color:#1a1a1a;">Flowline</div><div class="ab" style="left:54px;top:373px;width:6px;height:1px;background:repeating-linear-gradient(90deg,#8a8a8a 0 1px,transparent 1px 2px)"></div><svg class="ab" style="left:45px;top:368px" width="10" height="10"><rect x="0.5" y="0.5" width="9" height="9" rx="1" fill="#f6f6f6" stroke="#9a9a9a"/><path d="M2.5 5h5M5 2.5v5" stroke="#3a4a8a" stroke-width="1"/></svg><svg class="ab" style="left:60px;top:364px" width="16" height="16" viewBox="0 0 16 16"><defs><radialGradient id="cg" cx="0.4" cy="0.3" r="0.7"><stop offset="0" stop-color="#b9c8ff"/><stop offset="0.6" stop-color="#4a66e0"/><stop offset="1" stop-color="#2236a8"/></radialGradient></defs><circle cx="8" cy="8" r="7.2" fill="url(#cg)" stroke="#1b2a80" stroke-width="0.6"/><path d="M3.8 8.5l2.8 2.8 5.8-6.5" fill="none" stroke="#111" stroke-width="2"/></svg><svg class="ab" style="left:79px;top:366px" width="8" height="12" viewBox="0 0 8 12"><circle cx="4" cy="4" r="3.6" fill="#8c8c8c"/><rect x="2.3" y="6" width="3.4" height="3" fill="#8c8c8c"/><rect x="2.5" y="9" width="3" height="2.5" fill="#5a2a1a"/></svg><svg class="ab" style="left:90px;top:364px" width="15" height="16" viewBox="0 0 15 16"><path d="M1 5q6-6 12 0M1 9q6-6 12 0M1 13q6-6 12 0" fill="none" stroke="#2eb84a" stroke-width="1.3"/></svg><div class="t" style="left:110px;top:366.5px;color:#1a1a1a;">Flowline Model Filleting</div><svg class="ab" style="left:27px;top:385px" width="10" height="10"><rect x="0.5" y="0.5" width="9" height="9" rx="1" fill="#f6f6f6" stroke="#9a9a9a"/><path d="M2.5 5h5M5 2.5v5" stroke="#3a4a8a" stroke-width="1"/></svg><div class="ab" style="left:36px;top:390px;width:4px;height:1px;background:repeating-linear-gradient(90deg,#8a8a8a 0 1px,transparent 1px 2px)"></div><svg class="ab" style="left:40px;top:382px" width="18" height="15" viewBox="0 0 18 15"><path d="M1 2h5l2 2h7v9H1z" fill="#cfe6fb" stroke="#3d8ed0"/><path d="M3 6h14l-2 7H1z" fill="#8cc6f3" stroke="#3d8ed0"/></svg><div class="t" style="left:64px;top:384px;color:#1a1a1a;">Uncalculated Toolpaths</div><svg class="ab" style="left:9px;top:402px" width="10" height="10"><rect x="0.5" y="0.5" width="9" height="9" rx="1" fill="#f6f6f6" stroke="#9a9a9a"/><path d="M2.5 5h5" stroke="#3a4a8a" stroke-width="1"/></svg><div class="ab" style="left:18px;top:407px;width:4px;height:1px;background:repeating-linear-gradient(90deg,#8a8a8a 0 1px,transparent 1px 2px)"></div><svg class="ab" style="left:22px;top:399px" width="16" height="16" viewBox="0 0 16 16"><rect x="1" y="1" width="4" height="9" fill="#bbb"/><rect x="6" y="3" width="4" height="8" fill="#999"/><rect x="11" y="1" width="4" height="6" fill="#777"/><rect x="11" y="7" width="2" height="8" fill="#888"/></svg><div class="t" style="left:44px;top:401px;color:#1a1a1a;font-weight:bold;">Outils</div><div class="ab" style="left:31px;top:415px;width:1px;height:43px;background:repeating-linear-gradient(#8a8a8a 0 1px,transparent 1px 2px)"></div><svg class="ab" style="left:27px;top:419px" width="10" height="10"><rect x="0.5" y="0.5" width="9" height="9" rx="1" fill="#f6f6f6" stroke="#9a9a9a"/><path d="M2.5 5h5M5 2.5v5" stroke="#3a4a8a" stroke-width="1"/></svg><div class="ab" style="left:36px;top:424px;width:8px;height:1px;background:repeating-linear-gradient(90deg,#8a8a8a 0 1px,transparent 1px 2px)"></div><svg class="ab" style="left:60px;top:418px" width="8" height="12" viewBox="0 0 8 12"><circle cx="4" cy="4" r="3.6" fill="#8c8c8c"/><rect x="2.3" y="6" width="3.4" height="3" fill="#8c8c8c"/><rect x="2.5" y="9" width="3" height="2.5" fill="#5a2a1a"/></svg><svg class="ab" style="left:74px;top:416px" width="11" height="16" viewBox="0 0 11 16"><path d="M1 0h9v11a4.5 4.5 0 0 1-9 0z" fill="#e5bd21" stroke="#a98a14" stroke-width="0.7"/><rect x="3" y="0" width="2" height="12" fill="#f6e7a5"/></svg><div class="t" style="left:92px;top:418px;color:#1a1a1a;">13MM Ball EM</div><svg class="ab" style="left:27px;top:436px" width="10" height="10"><rect x="0.5" y="0.5" width="9" height="9" rx="1" fill="#f6f6f6" stroke="#9a9a9a"/><path d="M2.5 5h5M5 2.5v5" stroke="#3a4a8a" stroke-width="1"/></svg><div class="ab" style="left:36px;top:441px;width:8px;height:1px;background:repeating-linear-gradient(90deg,#8a8a8a 0 1px,transparent 1px 2px)"></div><svg class="ab" style="left:60px;top:435px" width="8" height="12" viewBox="0 0 8 12"><circle cx="4" cy="4" r="3.6" fill="#f2e21c"/><rect x="2.3" y="6" width="3.4" height="3" fill="#f2e21c"/><rect x="2.5" y="9" width="3" height="2.5" fill="#5a2a1a"/></svg><svg class="ab" style="left:74px;top:433px" width="11" height="16" viewBox="0 0 11 16"><path d="M1 0h9v11a4.5 4.5 0 0 1-9 0z" fill="#e5bd21" stroke="#a98a14" stroke-width="0.7"/><rect x="3" y="0" width="2" height="12" fill="#f6e7a5"/></svg><div class="t" style="left:92px;top:435px;color:#1a1a1a;font-weight:bold;">&gt; 6MM Ball EM</div><svg class="ab" style="left:27px;top:453px" width="10" height="10"><rect x="0.5" y="0.5" width="9" height="9" rx="1" fill="#f6f6f6" stroke="#9a9a9a"/><path d="M2.5 5h5M5 2.5v5" stroke="#3a4a8a" stroke-width="1"/></svg><div class="ab" style="left:36px;top:458px;width:8px;height:1px;background:repeating-linear-gradient(90deg,#8a8a8a 0 1px,transparent 1px 2px)"></div><svg class="ab" style="left:60px;top:452px" width="8" height="12" viewBox="0 0 8 12"><circle cx="4" cy="4" r="3.6" fill="#8c8c8c"/><rect x="2.3" y="6" width="3.4" height="3" fill="#8c8c8c"/><rect x="2.5" y="9" width="3" height="2.5" fill="#5a2a1a"/></svg><svg class="ab" style="left:74px;top:450px" width="11" height="16" viewBox="0 0 11 16"><path d="M1 0h9v11a4.5 4.5 0 0 1-9 0z" fill="#e5bd21" stroke="#a98a14" stroke-width="0.7"/><rect x="3" y="0" width="2" height="12" fill="#f6e7a5"/></svg><div class="t" style="left:92px;top:452px;color:#1a1a1a;">4MM Ball EM</div><svg class="ab" style="left:9px;top:470px" width="10" height="10"><rect x="0.5" y="0.5" width="9" height="9" rx="1" fill="#f6f6f6" stroke="#9a9a9a"/><path d="M2.5 5h5M5 2.5v5" stroke="#3a4a8a" stroke-width="1"/></svg><div class="ab" style="left:18px;top:475px;width:4px;height:1px;background:repeating-linear-gradient(90deg,#8a8a8a 0 1px,transparent 1px 2px)"></div><svg class="ab" style="left:22px;top:468px" width="18" height="14" viewBox="0 0 18 14"><path d="M3 3q4-3 8-1t5 3-1 6-8 2-6-4z" fill="none" stroke="#2e8ee0" stroke-width="1.2"/></svg><div class="t" style="left:44px;top:469px;color:#1a1a1a;">Frontières</div><svg class="ab" style="left:9px;top:487px" width="10" height="10"><rect x="0.5" y="0.5" width="9" height="9" rx="1" fill="#f6f6f6" stroke="#9a9a9a"/><path d="M2.5 5h5M5 2.5v5" stroke="#3a4a8a" stroke-width="1"/></svg><div class="ab" style="left:18px;top:492px;width:4px;height:1px;background:repeating-linear-gradient(90deg,#8a8a8a 0 1px,transparent 1px 2px)"></div><svg class="ab" style="left:23px;top:484px" width="16" height="16" viewBox="0 0 16 16"><path d="M1 1q7 7 14 0M1 15q7-7 14 0M1 1q7 7 0 14M15 1q-7 7 0 14" fill="none" stroke="#2e8ee0" stroke-width="1.4"/></svg><div class="t" style="left:44px;top:486px;color:#1a1a1a;">Motifs</div><div class="ab" style="left:14px;top:509px;width:8px;height:1px;background:repeating-linear-gradient(90deg,#8a8a8a 0 1px,transparent 1px 2px)"></div><svg class="ab" style="left:22px;top:501px" width="18" height="16" viewBox="0 0 18 16"><path d="M2 8l7-5 7 5-7 5z" fill="#bbb"/><path d="M9 3l7 5-7 5z" fill="#999"/><circle cx="9" cy="5" r="3" fill="#3c8fd8"/></svg><div class="t" style="left:44px;top:503px;color:#1a1a1a;">Groupes de features</div><div class="ab" style="left:14px;top:526px;width:8px;height:1px;background:repeating-linear-gradient(90deg,#8a8a8a 0 1px,transparent 1px 2px)"></div><svg class="ab" style="left:23px;top:517px" width="16" height="17" viewBox="0 0 16 17"><rect x="5" y="0" width="5" height="3" fill="#888"/><rect x="6" y="3" width="3" height="7" fill="#666"/><path d="M1 9v6h14V9h-3v3H4V9z" fill="#c22"/></svg><div class="t" style="left:44px;top:520px;color:#1a1a1a;">Ensembles de trous</div><svg class="ab" style="left:9px;top:538px" width="10" height="10"><rect x="0.5" y="0.5" width="9" height="9" rx="1" fill="#f6f6f6" stroke="#9a9a9a"/><path d="M2.5 5h5" stroke="#3a4a8a" stroke-width="1"/></svg><div class="ab" style="left:18px;top:543px;width:4px;height:1px;background:repeating-linear-gradient(90deg,#8a8a8a 0 1px,transparent 1px 2px)"></div><svg class="ab" style="left:22px;top:534px" width="18" height="17" viewBox="0 0 18 17"><line x1="3" y1="14" x2="3" y2="1" stroke="#1e88e5"/><line x1="4" y1="13" x2="12" y2="6" stroke="#2eaa44"/><line x1="4" y1="15" x2="16" y2="15" stroke="#e53935"/><rect x="1" y="13" width="3" height="3" fill="#bbb"/></svg><div class="t" style="left:44px;top:537px;color:#1a1a1a;font-weight:bold;">Plans de travail</div><div class="ab" style="left:31px;top:551px;width:1px;height:9px;background:repeating-linear-gradient(#8a8a8a 0 1px,transparent 1px 2px)"></div><div class="ab" style="left:32px;top:560px;width:24px;height:1px;background:repeating-linear-gradient(90deg,#8a8a8a 0 1px,transparent 1px 2px)"></div><svg class="ab" style="left:56px;top:551px" width="32" height="17" viewBox="0 0 32 17"><path d="M6 2l1 3M1 7h3M2 12l3-2M10 12l-3-2M11 7H8M10 2L9 5" stroke="#e0c000" stroke-width="0.8"/><circle cx="6" cy="8" r="3" fill="#f5e84a"/><rect x="5" y="10" width="2" height="3" fill="#553"/><line x1="17" y1="14" x2="17" y2="1" stroke="#1e88e5"/><line x1="18" y1="13" x2="25" y2="6" stroke="#2eaa44"/><line x1="18" y1="15" x2="30" y2="15" stroke="#e53935"/><rect x="15.5" y="13.5" width="3" height="3" fill="#bbb"/></svg><div class="t" style="left:92px;top:554px;color:#1a1a1a;font-weight:bold;">&gt; Programmed orgin</div><svg class="ab" style="left:9px;top:572px" width="10" height="10"><rect x="0.5" y="0.5" width="9" height="9" rx="1" fill="#f6f6f6" stroke="#9a9a9a"/><path d="M2.5 5h5M5 2.5v5" stroke="#3a4a8a" stroke-width="1"/></svg><div class="ab" style="left:18px;top:577px;width:4px;height:1px;background:repeating-linear-gradient(90deg,#8a8a8a 0 1px,transparent 1px 2px)"></div><svg class="ab" style="left:22px;top:568px" width="18" height="17" viewBox="0 0 18 17"><path d="M1 11l8-4 8 4-8 5z" fill="#2fb9c9"/><path d="M1 7l8-4 8 4-8 5z" fill="#eee03a"/><path d="M1 4l8-4 8 4-8 4z" fill="#3cc6d0"/></svg><div class="t" style="left:44px;top:571px;color:#1a1a1a;">Niveaux, ensembles et brides</div><svg class="ab" style="left:9px;top:589px" width="10" height="10"><rect x="0.5" y="0.5" width="9" height="9" rx="1" fill="#f6f6f6" stroke="#9a9a9a"/><path d="M2.5 5h5" stroke="#3a4a8a" stroke-width="1"/></svg><div class="ab" style="left:18px;top:594px;width:4px;height:1px;background:repeating-linear-gradient(90deg,#8a8a8a 0 1px,transparent 1px 2px)"></div><svg class="ab" style="left:23px;top:586px" width="16" height="16" viewBox="0 0 16 16"><path d="M1 3l3-2h11v12l-3 2H1z" fill="#e2e2e2" stroke="#8a8a8a" stroke-width="0.8"/><path d="M12 3l3-2v12l-3 2z" fill="#c8c8c8"/><circle cx="6.5" cy="9" r="3.5" fill="#d7ecfb" stroke="#777" stroke-width="0.6"/><path d="M6.5 9h3.5a3.5 3.5 0 0 1-3.5 3.5z" fill="#3c8fd8"/></svg><div class="t" style="left:44px;top:588px;color:#1a1a1a;">Modèles</div><div class="ab" style="left:31px;top:602px;width:1px;height:26px;background:repeating-linear-gradient(#8a8a8a 0 1px,transparent 1px 2px)"></div><div class="ab" style="left:60px;top:603px;width:51px;height:16px;background:#efefef"></div><svg class="ab" style="left:27px;top:606px" width="10" height="10"><rect x="0.5" y="0.5" width="9" height="9" rx="1" fill="#f6f6f6" stroke="#9a9a9a"/><path d="M2.5 5h5M5 2.5v5" stroke="#3a4a8a" stroke-width="1"/></svg><div class="ab" style="left:36px;top:611px;width:6px;height:1px;background:repeating-linear-gradient(90deg,#8a8a8a 0 1px,transparent 1px 2px)"></div><svg class="ab" style="left:41px;top:603px" width="16" height="16" viewBox="0 0 16 16"><path d="M1 3l3-2h11v12l-3 2H1z" fill="#e2e2e2" stroke="#8a8a8a" stroke-width="0.8"/><path d="M12 3l3-2v12l-3 2z" fill="#c8c8c8"/><circle cx="6.5" cy="9" r="3.5" fill="#d7ecfb" stroke="#777" stroke-width="0.6"/><path d="M6.5 9h3.5a3.5 3.5 0 0 1-3.5 3.5z" fill="#3c8fd8"/></svg><div class="t" style="left:62px;top:605px;color:#1a1a1a;">Forge die</div><svg class="ab" style="left:27px;top:623px" width="10" height="10"><rect x="0.5" y="0.5" width="9" height="9" rx="1" fill="#f6f6f6" stroke="#9a9a9a"/><path d="M2.5 5h5M5 2.5v5" stroke="#3a4a8a" stroke-width="1"/></svg><div class="ab" style="left:36px;top:628px;width:6px;height:1px;background:repeating-linear-gradient(90deg,#8a8a8a 0 1px,transparent 1px 2px)"></div><svg class="ab" style="left:41px;top:620px" width="16" height="16" viewBox="0 0 16 16"><path d="M1 3l3-2h11v12l-3 2H1z" fill="#e2e2e2" stroke="#8a8a8a" stroke-width="0.8"/><path d="M12 3l3-2v12l-3 2z" fill="#c8c8c8"/><circle cx="6.5" cy="9" r="3.5" fill="#d7ecfb" stroke="#777" stroke-width="0.6"/><path d="M6.5 9h3.5a3.5 3.5 0 0 1-3.5 3.5z" fill="#3c8fd8"/></svg><div class="t" style="left:62px;top:622px;color:#1a1a1a;">Vise</div><div class="ab" style="left:14px;top:645px;width:8px;height:1px;background:repeating-linear-gradient(90deg,#8a8a8a 0 1px,transparent 1px 2px)"></div><svg class="ab" style="left:22px;top:637px" width="17" height="16" viewBox="0 0 17 16"><path d="M0 9l8.5-5 8.5 5-8.5 6z" fill="#3c8fd8"/><path d="M0 6l8.5-5 8.5 5-8.5 6z" fill="#5aaef0"/><path d="M4 6l4.5-2.5L13 6l-4.5 3z" fill="#8ccbf5"/></svg><div class="t" style="left:44px;top:639px;color:#1a1a1a;">Matières restantes</div><svg class="ab" style="left:22px;top:654px" width="18" height="15" viewBox="0 0 18 15"><path d="M1 2h5l2 2h7v9H1z" fill="#cfe6fb" stroke="#3d8ed0"/></svg><div class="t" style="left:44px;top:656px;color:#1a1a1a;">Stock</div></div></div>
<div class="ab" style="left:272px;top:140px;width:1038px;height:536px;background:linear-gradient(#f0f0f0,#747474);overflow:hidden">
<svg class="ab" style="left:0;top:0" width="1038" height="536" viewBox="272 140 1038 536">
<g id="model" stroke="#000" stroke-width="1" stroke-linejoin="round" shape-rendering="crispEdges">
<!-- right end side faces -->
<polygon points="1099,376 1188,330 1186,392 1097,437" fill="#595959"/>
<polygon points="1097,437 1189,391 1186,451 1178,462 1178,516 1183,519 1183,547 1099,594" fill="#5a5a5a"/>
<polygon points="1178,513 1185,516 1183,519 1178,516" fill="#e0841f" stroke-width="0.4"/>
<polygon points="1097,437 1189,391 1189,396 1099,442" fill="#7a7a7a"/>
<ellipse cx="1143" cy="468" rx="13.5" ry="41" fill="#2f2f2f" stroke="#111" stroke-width="0.8"/>
<ellipse cx="1144" cy="467" rx="7.5" ry="22" fill="#3c3c3c" stroke="#777" stroke-width="0.6"/>
<circle cx="1141" cy="435" r="1.6" fill="#555"/><circle cx="1151" cy="458" r="1.6" fill="#555"/><circle cx="1134" cy="478" r="1.6" fill="#555"/><circle cx="1142" cy="501" r="1.6" fill="#555"/>
<!-- right block top face -->
<polygon points="976,363 1061,316 1188,330 1100,376" fill="#6e6e6e"/>
<!-- orange window in right block -->
<polygon points="1123,371 1163,351 1160,401 1121,423" fill="#b76918"/>
<polygon points="1155,357 1163,351 1160,401 1154,404" fill="#d27c22" stroke-width="0.5"/>
<polygon points="1121,394 1155,400 1160,401 1121,423" fill="#e8891f" stroke-width="0.5"/>
<!-- back jaw top face -->
<polygon points="442,305 530,258 700,278 700,302 649,316 648,328" fill="#6d6d6d"/>
<polygon points="442,305 648,328 648,333 442,310" fill="#555"/>
<polygon points="442,310 648,333 646,391 439,370" fill="#b76918"/>
<polygon points="439,370 646,391 646,396 439,375" fill="#6a6a6a"/>
<!-- inner slide region between jaws -->
<polygon points="680,400 767,355 940,372 940,430 690,402" fill="#6a6a6a"/>
<polygon points="803,380 940,391 940,414 803,399" fill="#5e5e5e"/>
<polygon points="690,388 803,399 940,414 940,430 690,402" fill="#6c6c6c"/>
<polygon points="705,388 735,371 803,380 772,396" fill="#e0841f"/>
<polygon points="772,396 803,380 803,399 772,398" fill="#a85f15"/>
<!-- light gap under blue -->
<polygon points="767,343 940,361 940,372 767,355" fill="#c6c6c6" stroke="none"/>
<!-- handle -->
<path d="M365,364 L415,369 L415,393 L361,387 Q359,372 365,364 Z" fill="#454545"/>
<path d="M361,387 L415,393 L415,409 L364,403 Q360,396 361,387 Z" fill="#303030"/>
<!-- base top strip left -->
<polygon points="415,373 439,361 439,375" fill="#707070"/>
<!-- left cavity (orange) -->
<polygon points="413,419 700,449 820,462 817,541 704,521 405,489 444,470 446,432 428,430" fill="#b76918"/>
<polygon points="413,419 700,449 820,462 820,473 700,460 428,430" fill="#7a4713"/>
<polygon points="444,470 446,483 688,508 704,511 704,517 412,486" fill="#c47320" stroke-width="1"/>
<polygon points="405,488 444,470 446,473 412,486 704,517 704,522" fill="#f39a35" stroke-width="1"/>
<polygon points="689,459 699,460 699,510 689,508" fill="#a35c16"/>
<polygon points="699,460 780,469 780,486 699,477" fill="#c06f1d"/>
<polygon points="699,477 780,486 780,497 699,484" fill="#b76918" stroke-width="0.5"/>
<polygon points="699,484 780,497 780,508 699,510" fill="#e0841f" stroke-width="0.5"/>
<polygon points="780,469 819,473 817,521 780,519" fill="#b76918"/>
<polygon points="699,510 780,508 817,521 817,541 797,539 737,523 705,519" fill="#d27c22" stroke-width="0.5"/>
<path d="M740,517 Q760,505 790,520" fill="none" stroke-width="0.6"/>
<path d="M735,502 Q760,497 778,505" fill="none" stroke-width="0.6"/>
<!-- right cavity (orange) -->
<polygon points="860,467 1106,502 1106,558 857,545" fill="#b76918"/>
<polygon points="860,467 1106,502 1106,510 871,478" fill="#7a4713"/>
<polygon points="860,467 871,478 868,537 857,545" fill="#c06f1d"/>
<polygon points="919,484 928,485 928,537 919,536" fill="#a35c16"/>
<polygon points="928,485 1011,494 1011,545 928,537" fill="#c47320"/>
<polygon points="928,497 1011,507 1011,545 928,540" fill="#e0841f" stroke-width="1"/>
<ellipse cx="965" cy="511" rx="20" ry="3" fill="#b76918" stroke-width="0.8" transform="rotate(6 965 511)"/>
<ellipse cx="955" cy="528" rx="26" ry="3.5" fill="#b76918" stroke-width="0.8" transform="rotate(6 955 528)"/>
<polygon points="986,476 1003,478 1003,484 986,482" fill="#bdbdbd" stroke-width="0.8"/>
<polygon points="857,545 868,537 1011,545 1106,553 1106,558 1095,564 966,549 935,548" fill="#d27c22" stroke-width="0.8"/>
<path d="M945,548 Q960,538 985,546" fill="none" stroke-width="0.8"/>
<!-- main front face (grey) -->
<polygon points="415,373 700,402.7 936,429.5 969,433 973,363 1099,376 1097,505 1107,501 861,468 860,546 816,541 820,462 700,449 414,419" fill="#5e5e5e"/>
<!-- fixed jaw dark bar -->
<polygon points="939,345 1037,299 1061,305 974,349" fill="#3e3e3e"/>
<polygon points="974,349 1061,305 1060,316 973,362" fill="#2e2e2e"/>
<polygon points="939,345 974,349 973,433 937,428" fill="#363636"/>
<!-- lower bars -->
<polygon points="405,488 704,522 704,556 403,523" fill="#5e5e5e"/>
<polygon points="704,517 737,521 737,559 704,556" fill="#c47320"/>
<rect x="712" y="520" width="14" height="38" fill="#d88a3a" stroke="none" opacity="0.6"/>
<polygon points="737,523 798,530 798,539 816,541 820,541 857,545 935,548 935,580 850,571 850,563 829,562 816,568 737,558" fill="#5e5e5e"/>
<polygon points="816,568 829,562 832,563 820,566" fill="#e0841f" stroke-width="0.4"/>
<polygon points="935,546 966,549 966,584 935,580" fill="#c47320"/>
<rect x="942" y="549" width="14" height="33" fill="#d88a3a" stroke="none" opacity="0.6"/>
<polygon points="966,549 1095,564 1095,596 966,584" fill="#5e5e5e"/>
<polygon points="1095,564 1106,558 1106,590 1095,596" fill="#595959"/>
<!-- dark jaw piece (left) -->
<polygon points="649,316 674,302 700,302 700,316" fill="#4a4a4a"/>
<polygon points="649,316 680,316 680,400 646,397" fill="#363636"/>
<polygon points="680,333 767,343 767,355 680,400" fill="#2d2d2d"/>
<ellipse cx="697" cy="350" rx="5" ry="16" fill="none" stroke="#1a1a1a" stroke-width="1"/>
<!-- blue block -->
<polygon points="953,255 1041,208 1037,301 949,346" fill="#005ab5"/>
<polygon points="679,225 953,255 949,361 674,331" fill="#0064c8"/>
<polygon points="679,225 767,179 791,181 800,179 987,203 1041,208 953,255" fill="#086cd6"/>
<!-- cutouts -->
<polygon points="720,204 749,208 727,221 699,220" fill="#0a66c8" stroke-width="0.8"/>
<polygon points="972,223 995,212 1034,214 1029,219 1000,231 999,226" fill="#0a66c8" stroke-width="0.8"/>
<!-- boss base (walls) -->
<path d="M750,232 L761,224 L771,195 L805,174 L837,156 L850,155 L958,167 L963,170 L968,184 L975,196 L987,204 L962,218 L945,226 L914,231 L891,240 L867,245 L850,245 L839,238 Z" fill="#0b6fd9"/>
<g stroke="none">
<path d="M772,197 L788,201 L776,223 L757,221 Z" fill="#1f88ee"/>
<path d="M834,204 L871,202 L882,223 L870,228 L849,232 L838,230 Z" fill="#1a7fe6"/>
<path d="M901,192 L938,186 L955,214 L914,229 Z" fill="#1a7fe6"/>
<path d="M958,168 L972,194 L985,204 L962,214 L948,206 L938,186 Z" fill="#1f88ee"/>
<ellipse cx="766" cy="227" rx="5" ry="2" fill="#5ab0ff" opacity="0.7"/>
<ellipse cx="861" cy="236" rx="5" ry="2" fill="#5ab0ff" opacity="0.7"/>
<ellipse cx="885" cy="232" rx="5" ry="2" fill="#5ab0ff" opacity="0.7"/>
<ellipse cx="924" cy="220" rx="5" ry="2" fill="#5ab0ff" opacity="0.7"/>
<ellipse cx="951" cy="207" rx="5" ry="2" fill="#5ab0ff" opacity="0.7"/>
</g>
<!-- boss plateau -->
<path d="M771,195 L805,174 L837,156 L850,155 L958,167 L938,185 L934,187 L889,190 L871,202 L860,205 L827,204 L783,198 Z" fill="#086cd6"/>
<path d="M772,197 L757,221 M788,201 L776,223 M834,204 L838,230 L849,232 L866,230 L871,227 L900,219 M866,205 L870,228 M877,201 L882,223 M750,232 L843,238 L860,242 L900,248 M901,192 L909,216 L914,229 M938,186 L948,206 L955,214 M958,168 L972,194 L985,204 M904,218 L924,216 L948,207 L972,196 M907,228 L945,224 L962,218 L987,204 M761,224 L776,223" fill="none" stroke-width="1"/>
<!-- green -->
<path d="M795,194 L801,189 L800,186 L812,185 L815,178 L829,175 L840,170 L852,163 L860,160 L880,158 L897,168 L938,167 L935,170 L896,170 L879,178 L867,179 L865,194 L849,197 L843,200 L805,197 Z" fill="#00f000" stroke-width="0.8"/>
<path d="M842,171 L858,164 M846,174 L862,166 M880,160 L893,166 M905,163 L930,165" fill="none" stroke="#1a6ad0" stroke-width="0.8" shape-rendering="auto"/>
<path d="M898,162 L935,165 L932,168 L900,167 Z" fill="#3cc03c" stroke-width="0.6"/>
<!-- tool and axes -->
<g shape-rendering="auto" stroke="none">
<rect x="818" y="140" width="12" height="37" rx="6" fill="#dcc81a"/>
<rect x="818" y="140" width="12" height="7" fill="#1fb52a"/>
<rect x="820" y="147" width="3" height="26" fill="#efe060" opacity="0.5"/>
<path d="M819.5,178 a4.5,4.5 0 0 0 9,0" fill="none" stroke="#fff" stroke-width="1"/>
<rect x="861" y="140" width="3" height="40" fill="#b0222a"/>
<path d="M848,188 L862,182" stroke="#3a78c8" stroke-width="3"/>
<circle cx="847" cy="188" r="4" fill="#3a78c8"/>
<circle cx="862.5" cy="181.5" r="4.5" fill="#f07a1a"/>
<path d="M866,182 Q895,178 920,188" fill="none" stroke="#4e9a3a" stroke-width="2"/>
<text x="847" y="192" font-family="Liberation Sans" font-size="12" fill="#fff">X</text>
<text x="925" y="186" font-family="Liberation Sans" font-size="12" fill="#fff">Y</text>
</g>

</g>
<g stroke-width="1.3" fill="none"><path d="M315 633L316 597" stroke="#fff"/><path d="M312.5 598l3.5-6 3.5 6z" stroke="#fff" fill="none"/><path d="M315 633L350 636" stroke="#f00"/><path d="M349 633l6 3-6 2.5z" stroke="#f00"/><rect x="304" y="632" width="6" height="5" stroke="#f00"/><path d="M309 630l3-6" stroke="#f00"/></g>
<text x="321" y="588" font-family="Liberation Sans" font-size="11" fill="#fff">Z</text>
<text x="359" y="632" font-family="Liberation Sans" font-size="11" fill="#f00">Y</text>
<g transform="translate(1241,167)">
 <ellipse cx="22" cy="40" rx="24" ry="5" fill="#000" opacity="0.07"/>
 <path d="M1 2h34l-1 37H1z" fill="#e8e8e8" stroke="#888" stroke-width="0.8" stroke-dasharray="4 3"/>
 <path d="M1 2l7-2h34l-7 2z" fill="#eeeeee" stroke="#999" stroke-width="0.8" stroke-dasharray="4 3"/>
 <path d="M35 2l7-2v33l-8 6z" fill="#dcdcdc" stroke="#999" stroke-width="0.8" stroke-dasharray="4 3"/>
 <rect x="7" y="9" width="21" height="22" fill="#dedfe2"/>
 <text x="17" y="24" font-family="Liberation Sans" font-weight="bold" font-size="7.5" fill="#8a8a8e" text-anchor="middle" transform="rotate(4 17 22)">DROITE</text>
</g>
</svg></div>
<div class="ab" style="left:1310px;top:140px;width:51px;height:536px;background:#fff;border-left:1px solid #d0d0d0"></div>
<div class="ab" style="left:1311px;top:140px;width:50px;height:32px;background:#f0f0f0;border-bottom:1px solid #d0d0d0"></div>
<svg class="ab" style="left:1345px;top:152px" width="9" height="9"><path d="M1 1l7 7M8 1l-7 7" stroke="#555" stroke-width="1.4"/></svg>
<div class="ab" style="left:1361px;top:140px;width:1px;height:570px;background:#fff"></div>

<svg class="ab" style="left:1322px;top:180px" width="34" height="34" viewBox="0 0 34 34">
 <rect x="2" y="2" width="7" height="29" fill="#ddd" stroke="#888" stroke-width="0.6"/>
 <rect x="9" y="7" width="12" height="5" fill="#3ab0b8"/><rect x="9" y="24" width="17" height="5" fill="#3ab0b8"/>
 <rect x="20" y="3" width="7" height="12" rx="3" fill="#ddd" stroke="#888" stroke-width="0.6"/><rect x="22" y="15" width="3" height="5" fill="#f2a900"/>
 <path d="M33 28v5h-5z" fill="#111"/>
</svg>
<svg class="ab" style="left:1321px;top:218px" width="34" height="34" viewBox="0 0 34 34">
 <path d="M1 8l7-7h23l-7 7z" fill="#6ab0ea" stroke="#444" stroke-width="0.9"/>
 <path d="M1 8h23v22H1z" fill="#fff" stroke="#444" stroke-width="0.9"/><path d="M24 8l7-7v22l-7 7z" fill="#fff" stroke="#444" stroke-width="0.9"/>
 <path d="M8 1v22h23M8 23l-7 7" fill="none" stroke="#444" stroke-width="0.7"/>
 <path d="M34 29v5h-5z" fill="#111"/>
</svg>
<svg class="ab" style="left:1321px;top:256px" width="34" height="34" viewBox="0 0 34 34">
 <path d="M2 9l13-7 13 7v15l-13 7-13-7z" fill="#eee" stroke="#555" stroke-width="0.9"/>
 <path d="M15 2l13 7v15z" fill="#6ab0ea"/><path d="M2 9l13 7 13-7M15 16v15" fill="none" stroke="#555" stroke-width="0.9"/>
 <path d="M34 29v5h-5z" fill="#111"/>
</svg>
<svg class="ab" style="left:1322px;top:294px" width="32" height="32" viewBox="0 0 32 32">
 <circle cx="10" cy="19" r="7" fill="none" stroke="#444" stroke-width="2.2"/><path d="M15 24l7 7" stroke="#444" stroke-width="3"/>
 <path d="M20 4a7 7 0 1 1-2 10" fill="none" stroke="#1e88e5" stroke-width="2"/><path d="M16 3l6 0-2 5z" fill="#1e88e5"/>
</svg>
<svg class="ab" style="left:1323px;top:338px" width="30" height="32" viewBox="0 0 30 32">
 <path d="M1 1h13l7 7v22H1z" fill="#f2f2f2" stroke="#666" stroke-width="0.9"/><path d="M14 1v7h7" fill="#555"/>
 <path d="M13 26a6 6 0 0 1 11-4M26 23a6 6 0 0 1-11 4" fill="none" stroke="#1e88e5" stroke-width="2"/>
 <path d="M22 19l4 2-3 3z M16 30l-3-2 3-3z" fill="#1e88e5"/>
</svg>
<svg class="ab" style="left:1322px;top:382px" width="32" height="32" viewBox="0 0 32 32">
 <circle cx="10" cy="20" r="7" fill="none" stroke="#444" stroke-width="2.2"/><path d="M15 25l6 6" stroke="#444" stroke-width="3"/>
 <rect x="18" y="1" width="12" height="12" fill="#eee" stroke="#666"/><path d="M20 3l8 8M28 3l-8 8M20 3h3M20 3v3M28 11h-3M28 11v-3M28 3h-3M28 3v3M20 11h3M20 11v-3" stroke="#555" stroke-width="0.9"/>
</svg>
<svg class="ab" style="left:1322px;top:426px" width="34" height="34" viewBox="0 0 34 34">
 <circle cx="10" cy="20" r="7" fill="none" stroke="#444" stroke-width="2.2"/><path d="M15 25l6 6" stroke="#444" stroke-width="3"/>
 <rect x="17.5" y="1.5" width="14" height="9" fill="#fff" stroke="#555"/>
 <path d="M34 29v5h-5z" fill="#111"/>
</svg>
<div class="ab" style="left:1318px;top:469px;width:38px;height:37px;background:#cde6f7;border:1px solid #92c5ec"></div>
<svg class="ab" style="left:1321px;top:471px" width="34" height="34" viewBox="0 0 34 34">
 <circle cx="16" cy="17" r="14" fill="#8ec7f2"/>
 <path d="M4 11q6-8 14-6 2 4-1 8t1 7q-4 3-8-1-5-2-6-8z" fill="#2ed06a"/>
 <path d="M3 19q4-3 8 0t6 5q2 4-1 7-8-1-13-12z" fill="#f08080"/>
 <path d="M33 28v5h-5z" fill="#111"/>
</svg>
<svg class="ab" style="left:1322px;top:516px" width="32" height="32" viewBox="0 0 32 32">
 <path d="M1 8l7-7h23v23l-7 7H1z" fill="none" stroke="#444" stroke-width="0.9"/>
 <path d="M1 8h23v23M24 8l7-7M8 1v23h23M8 24l-7 7" fill="none" stroke="#444" stroke-width="0.9"/>
</svg>
<svg class="ab" style="left:1322px;top:560px" width="32" height="32" viewBox="0 0 32 32">
 <path d="M1 8l7-7h23v23l-7 7H1z" fill="#8ec7f2" stroke="#3d8ed0" stroke-width="1"/>
 <path d="M1 8h23v23M24 8l7-7M8 1v23h23M8 24l-7 7" fill="none" stroke="#3d8ed0" stroke-width="0.9"/>
</svg>
<svg class="ab" style="left:1322px;top:606px" width="34" height="30" viewBox="0 0 34 30">
 <path d="M1 10h5M20 10h9v14H1V10" fill="none" stroke="#555" stroke-width="1"/>
 <path d="M9 1v18l4-4 3 7 3-1-3-7h6z" fill="#1e88e5"/>
 <path d="M34 25v5h-5z" fill="#111"/>
</svg>
<svg class="ab" style="left:1322px;top:643px" width="32" height="30" viewBox="0 0 32 30">
 <path d="M2 6v22l6-6 4 8 4-2-4-8h9z" fill="#1e88e5"/>
 <path d="M17 7a5 5 0 1 1 5 7" fill="none" stroke="#555" stroke-width="1.3"/><path d="M14 5l4 4 2-5z" fill="#555"/>
</svg>

<div class="ab" style="left:1px;top:676px;width:1361px;height:1px;background:#d0d0d0"></div>
<div class="ab" style="left:1px;top:677px;width:1361px;height:31px;background:#f0f0f0"></div>
<div class="ab" style="left:0;top:708px;width:1363px;height:1px;background:#fff"></div>
<div class="ab" style="left:0;top:709px;width:1363px;height:1px;background:#454545"></div>
<div class="ab" style="left:0;top:0;width:1px;height:710px;background:#454545"></div>
<div class="ab" style="left:1362px;top:0;width:1px;height:710px;background:#454545"></div>

<svg class="ab" style="left:7px;top:681px" width="22" height="23" viewBox="0 0 22 23">
 <line x1="2" y1="20" x2="2" y2="3" stroke="#7ab8ea" stroke-width="1.5"/><path d="M0 5l2-4 2 4z" fill="#1e88e5"/>
 <line x1="3" y1="19" x2="17" y2="5" stroke="#2eaa44" stroke-width="1.2" stroke-dasharray="1 0.5"/><circle cx="19" cy="3" r="1.3" fill="#1e88e5"/>
 <line x1="4" y1="21" x2="18" y2="21" stroke="#f08080" stroke-width="1.5"/><path d="M17 22l4-4v4z" fill="#111"/><rect x="1" y="19.5" width="3" height="3" fill="#bbb"/>
</svg>
<div class="ab" style="left:33px;top:683px;width:83px;height:21px;background:#e3e3e3"></div>
<div class="t" style="left:36px;top:686px;font-size:12.5px;line-height:15px;color:#111;width:62px;overflow:hidden">Programmed</div>
<svg class="ab" style="left:104px;top:690px" width="10" height="7"><path d="M1 1l4 4 4-4" fill="none" stroke="#444" stroke-width="1.2"/></svg>
<svg class="ab" style="left:122px;top:682px" width="22" height="22" viewBox="0 0 22 22">
 <path d="M1 9l6-3v8l-6 3z" fill="#3c8fd8"/><path d="M7 6l4 2v8l-4-2z" fill="#6ab0ea"/>
 <path d="M8 13l-6 6M8 13l7 6M8 13V3" stroke="#1e88e5" stroke-width="1.3"/><path d="M15 19l-2-0.5 1-1.5z" fill="#444"/>
 <text x="15" y="9" font-size="7" font-family="Liberation Sans" fill="#1e88e5">X</text>
</svg>
<svg class="ab" style="left:147px;top:682px" width="22" height="22" viewBox="0 0 22 22">
 <path d="M10 6l6-3v9l-6 3z" fill="#6ab0ea"/><path d="M10 13V3M10 13l-7 5M10 13l6 5" stroke="#1e88e5" stroke-width="1.3"/><path d="M3 18l-1 1" stroke="#444"/>
 <text x="6" y="22" font-size="7" font-family="Liberation Sans" fill="#1e88e5">Y</text>
</svg>
<div class="ab" style="left:171px;top:682px;width:24px;height:22px;background:#cce4f7;border:1px solid #99c9ef"></div>
<svg class="ab" style="left:172px;top:682px" width="22" height="22" viewBox="0 0 22 22">
 <path d="M3 14l8-5 8 5-8 5z" fill="#4a9be0"/><path d="M11 14V3M11 14l-8-3M11 14l8-3" stroke="#1e88e5" stroke-width="1.2"/>
 <path d="M11 3v11" stroke="#444" stroke-width="1"/>
 <text x="2" y="9" font-size="7" font-family="Liberation Sans" fill="#1e88e5">Z</text>
</svg>
<svg class="ab" style="left:198px;top:683px" width="18" height="21" viewBox="0 0 18 21">
 <path d="M6 7V4a3 3 0 0 0-5 0v3" fill="none" stroke="#333" stroke-width="2"/>
 <rect x="4" y="9" width="12" height="11" rx="1.5" fill="#555" stroke="#222"/><path d="M6 12h8M6 14h8M6 16h8" stroke="#bbb" stroke-width="0.8"/>
</svg>
<svg class="ab" style="left:233px;top:683px" width="21" height="21" viewBox="0 0 21 21">
 <path d="M1 4h19M1 8h19M1 12h19M1 16h19M4 1v19M8 1v19M12 1v19M16 1v19" stroke="#c8c8c8" stroke-width="1"/>
</svg>
<div class="ab" style="left:257px;top:682px;width:50px;height:21px;border:1px solid #dcdcdc;background:#f0f0f0"></div>
<div class="box" style="left:320px;top:682px;width:53px">1203.92</div>
<div class="box" style="left:377px;top:682px;width:53px">237.618</div>
<div class="box" style="left:433px;top:682px;width:54px">0</div>
<svg class="ab" style="left:492px;top:683px" width="20" height="20" viewBox="0 0 20 20">
 <rect x="0.5" y="0.5" width="18" height="18" fill="#f4f4f4" stroke="#c8c8c8"/><path d="M8 5h9M8 10h9M8 15h9" stroke="#c8c8c8"/>
 <text x="2" y="7" font-size="5" fill="#bbb" font-family="Liberation Sans">X</text><text x="2" y="12" font-size="5" fill="#bbb" font-family="Liberation Sans">Y</text><text x="2" y="17" font-size="5" fill="#bbb" font-family="Liberation Sans">Z</text>
</svg>
<svg class="ab" style="left:517px;top:683px" width="20" height="20" viewBox="0 0 20 20">
 <path d="M3 17l12-12" stroke="#c8c8c8" stroke-width="1.2" stroke-dasharray="2 1"/><circle cx="16" cy="4" r="2.5" fill="#d0d0d0"/><path d="M1 17l3-3 3 3-3 3z" fill="none" stroke="#c8c8c8"/>
</svg>
<div class="ab" style="left:541px;top:682px;width:86px;height:21px;border:1px solid #dcdcdc;background:#f0f0f0"></div>
<svg class="ab" style="left:640px;top:683px" width="21" height="21" viewBox="0 0 21 21">
 <rect x="1" y="1" width="12" height="17" fill="#ddd" stroke="#666"/><path d="M3 6h2M6 6h2M9 6h2M3 9h2M6 9h2M9 9h2M3 12h2M6 12h2M3 15h2M6 15h2" stroke="#777" stroke-width="1.6"/>
 <rect x="13" y="10" width="3" height="10" fill="#1e88e5"/><rect x="17" y="10" width="3" height="10" fill="#1e88e5"/>
</svg>
<svg class="ab" style="left:674px;top:683px" width="23" height="21" viewBox="0 0 23 21">
 <path d="M1 3v6M22 3v6M1 6h21M5 4v4M9 3v4M13 4v4M17 3v4" stroke="#1e88e5" stroke-width="1"/>
 <text x="1" y="19" font-size="8" fill="#1e88e5" font-family="Liberation Sans">0 1 2</text>
</svg>
<div class="box" style="left:699px;top:682px;width:54px;font-size:12px;padding-left:6px">mm</div>
<svg class="ab" style="left:756px;top:682px" width="22" height="22" viewBox="0 0 22 22">
 <circle cx="11" cy="11" r="8" fill="none" stroke="#1e88e5" stroke-width="1.6"/><path d="M11 0v22M0 11h22" stroke="#1e88e5" stroke-width="1.4"/>
</svg>
<div class="box" style="left:780px;top:682px;width:54px">0.01</div>
<svg class="ab" style="left:838px;top:683px" width="20" height="21" viewBox="0 0 20 21">
 <path d="M9 1h9v9l-2 3h-5l-2-3z" fill="none" stroke="#1e88e5" stroke-width="1.4"/><path d="M13 13v5M11 19h4M1 11h2M4 11h2M7 11h1" stroke="#1e88e5" stroke-width="1.4"/>
</svg>
<div class="box" style="left:861px;top:682px;width:54px">0.0</div>
<svg class="ab" style="left:922px;top:683px" width="20" height="20" viewBox="0 0 20 20">
 <circle cx="10" cy="11" r="7" fill="none" stroke="#1e88e5" stroke-width="1.6"/><path d="M2 19L18 2" stroke="#1e88e5" stroke-width="1.6"/>
</svg>
<div class="box" style="left:943px;top:682px;width:54px">6.0</div>
<svg class="ab" style="left:1000px;top:683px" width="21" height="21" viewBox="0 0 21 21">
 <path d="M20 2L4 18" stroke="#1e88e5" stroke-width="1.6"/><path d="M3 9v10h10" fill="none" stroke="#1e88e5" stroke-width="1.6"/>
 <path d="M1 11q0 7 8 9" fill="none" stroke="#1e88e5" stroke-width="1"/>
</svg>
<div class="box" style="left:1024px;top:682px;width:54px">3.0</div>
<svg class="ab" style="left:1350px;top:698px" width="8" height="8"><path d="M6 0h2v2H6zM3 3h2v2H3zM6 3h2v2H6zM0 6h2v2H0zM3 6h2v2H3zM6 6h2v2H6z" fill="#999"/></svg>

<div class="kt" style="left:29px;top:14px">1</div><div class="kt" style="left:50px;top:14px">2</div><div class="kt" style="left:76px;top:14px">3</div><div class="kt" style="left:24px;top:32px">F</div><div class="kt" style="left:81px;top:44px">H</div><div class="kt" style="left:139px;top:44px">U</div><div class="kt" style="left:205px;top:44px">T</div><div class="kt" style="left:276px;top:44px">E</div><div class="kt" style="left:337px;top:44px">L</div><div class="kt" style="left:398px;top:44px">B</div><div class="kt" style="left:461px;top:44px">P</div><div class="kt" style="left:523px;top:44px">O</div><div class="kt" style="left:593px;top:44px">G</div><div class="kt" style="left:664px;top:44px">W</div><div class="kt" style="left:731px;top:44px">M</div><div class="kt" style="left:798px;top:44px">K</div><div class="kt" style="left:870px;top:44px">A</div><div class="kt" style="left:941px;top:44px">S</div><div class="kt" style="left:1012px;top:44px">N</div><div class="kt" style="left:1071px;top:44px">V</div>
</body></html>
